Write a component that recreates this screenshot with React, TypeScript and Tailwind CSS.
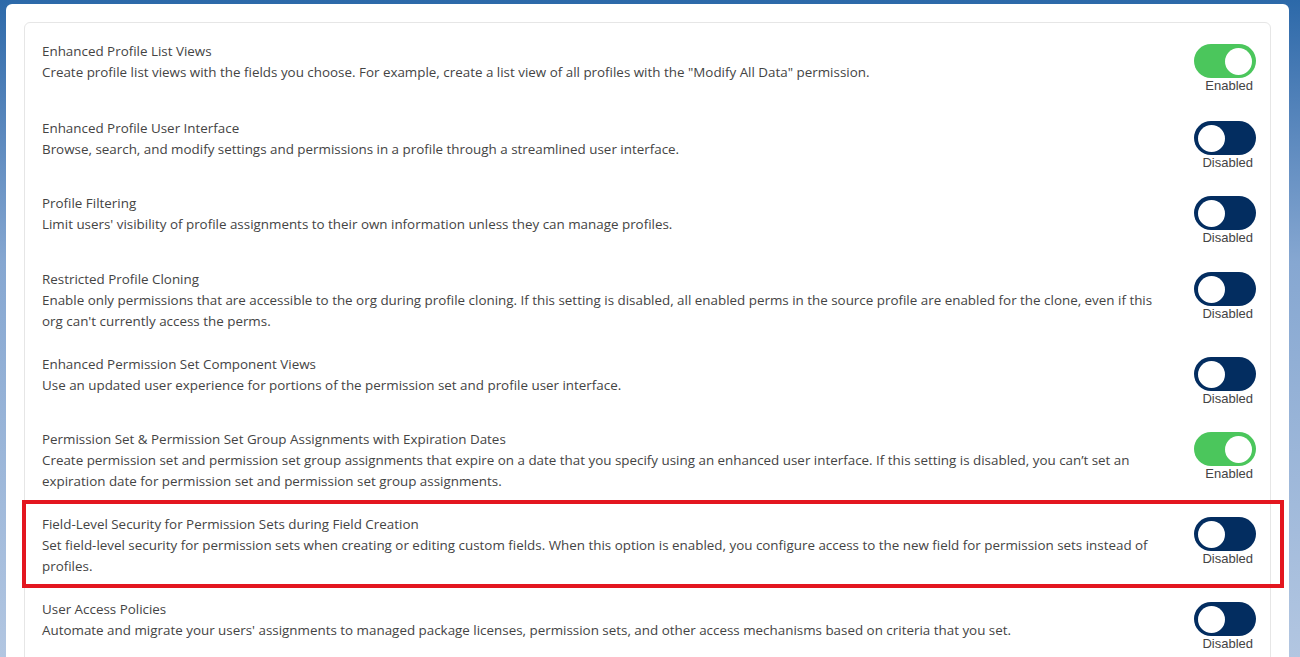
import React from 'react';

interface Setting {
  title: string;
  description: string;
  enabled: boolean;
  highlighted?: boolean;
  extra?: string;
}

const settings: Setting[] = [
  {
    title: 'Enhanced Profile List Views',
    description:
      'Create profile list views with the fields you choose. For example, create a list view of all profiles with the "Modify All Data" permission.',
    enabled: true,
    extra: 'pb-[13px]',
  },
  {
    title: 'Enhanced Profile User Interface',
    description: 'Browse, search, and modify settings and permissions in a profile through a streamlined user interface.',
    enabled: false,
  },
  {
    title: 'Profile Filtering',
    description: "Limit users' visibility of profile assignments to their own information unless they can manage profiles.",
    enabled: false,
    extra: 'pb-[12px]',
  },
  {
    title: 'Restricted Profile Cloning',
    description:
      "Enable only permissions that are accessible to the org during profile cloning. If this setting is disabled, all enabled perms in the source profile are enabled for the clone, even if this org can't currently access the perms.",
    enabled: false,
  },
  {
    title: 'Enhanced Permission Set Component Views',
    description: 'Use an updated user experience for portions of the permission set and profile user interface.',
    enabled: false,
  },
  {
    title: 'Permission Set & Permission Set Group Assignments with Expiration Dates',
    description:
      "Create permission set and permission set group assignments that expire on a date that you specify using an enhanced user interface. If this setting is disabled, you can’t set an expiration date for permission set and permission set group assignments.",
    enabled: true,
  },
  {
    title: 'Field-Level Security for Permission Sets during Field Creation',
    description:
      'Set field-level security for permission sets when creating or editing custom fields. When this option is enabled, you configure access to the new field for permission sets instead of profiles.',
    enabled: false,
    highlighted: true,
  },
  {
    title: 'User Access Policies',
    description:
      "Automate and migrate your users' assignments to managed package licenses, permission sets, and other access mechanisms based on criteria that you set.",
    enabled: false,
  },
];

function Toggle({ enabled }: { enabled: boolean }) {
  return (
    <div className="mt-[3px] flex w-[62px] shrink-0 flex-col">
      <div
        className={`flex h-[34px] w-[62px] items-center rounded-full px-[4px] ${
          enabled ? 'justify-end bg-[#4bc65c]' : 'justify-start bg-[#032d60]'
        }`}
      >
        <div className="h-[27px] w-[27px] rounded-full bg-white" />
      </div>
      <span className="pr-[3px] text-right font-['Liberation_Sans',Arial,sans-serif] text-[13px] leading-[16px] text-[#444444]">
        {enabled ? 'Enabled' : 'Disabled'}
      </span>
    </div>
  );
}

function SettingRow({ setting }: { setting: Setting }) {
  return (
    <div
      className={`relative flex items-start justify-between pl-[17px] pr-[14px] pt-[11px] ${setting.extra ?? 'pb-[11px]'}`}
    >
      <div className="w-[1124px] text-[13.4px] leading-[21px] text-[#444444]">
        <div>{setting.title}</div>
        <div>{setting.description}</div>
      </div>
      <Toggle enabled={setting.enabled} />
      {setting.highlighted && (
        <div className="pointer-events-none absolute -left-[3px] -right-[14px] -top-[3px] bottom-0 border-4 border-[#e3161f]" />
      )}
    </div>
  );
}

export default function App() {
  return (
    <div className="h-[657px] w-[1300px] overflow-hidden bg-gradient-to-b from-[#2c69a9] via-[#86a7d1] via-40% to-[#b2c6e1] pl-[6px] pr-[11px] pt-[4px] font-['Segoe_UI','Open_Sans',sans-serif]">
      <div className="h-[700px] rounded-[6px] bg-white px-[18px] pt-[18px]">
        <div className="rounded-[6px] border border-[#e6e6e6] bg-white pt-[7px]">
          {settings.map((s) => (
            <SettingRow key={s.title} setting={s} />
          ))}
        </div>
      </div>
    </div>
  );
}
